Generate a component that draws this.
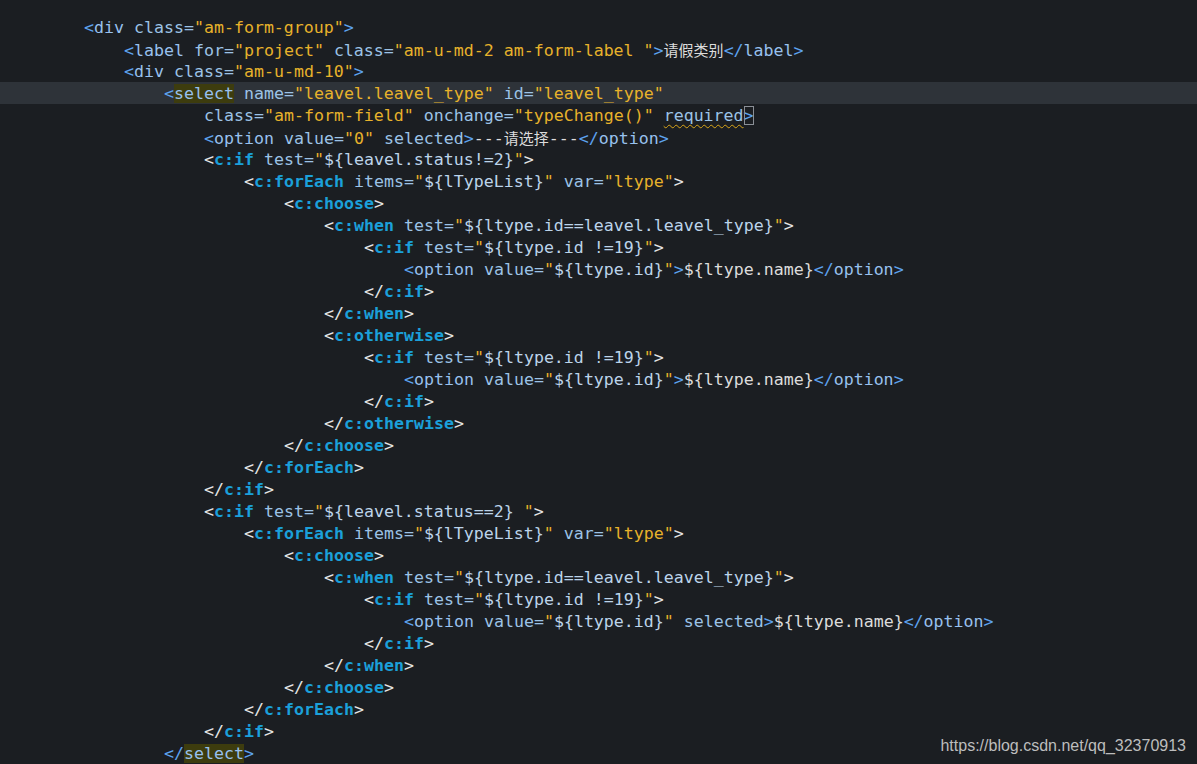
type Line = { lv: number; t: string; cont?: boolean; hl?: boolean }

const lines: Line[] = [
  { lv: 0, t: '<div class="am-form-group">' },
  { lv: 1, t: '<label for="project" class="am-u-md-2 am-form-label ">请假类别</label>' },
  { lv: 1, t: '<div class="am-u-md-10">' },
  { lv: 2, t: '<select name="leavel.leavel_type" id="leavel_type"', hl: true },
  { lv: 3, t: 'class="am-form-field" onchange="typeChange()" required>', cont: true },
  { lv: 3, t: '<option value="0" selected>---请选择---</option>' },
  { lv: 3, t: '<c:if test="${leavel.status!=2}">' },
  { lv: 4, t: '<c:forEach items="${lTypeList}" var="ltype">' },
  { lv: 5, t: '<c:choose>' },
  { lv: 6, t: '<c:when test="${ltype.id==leavel.leavel_type}">' },
  { lv: 7, t: '<c:if test="${ltype.id !=19}">' },
  { lv: 8, t: '<option value="${ltype.id}">${ltype.name}</option>' },
  { lv: 7, t: '</c:if>' },
  { lv: 6, t: '</c:when>' },
  { lv: 6, t: '<c:otherwise>' },
  { lv: 7, t: '<c:if test="${ltype.id !=19}">' },
  { lv: 8, t: '<option value="${ltype.id}">${ltype.name}</option>' },
  { lv: 7, t: '</c:if>' },
  { lv: 6, t: '</c:otherwise>' },
  { lv: 5, t: '</c:choose>' },
  { lv: 4, t: '</c:forEach>' },
  { lv: 3, t: '</c:if>' },
  { lv: 3, t: '<c:if test="${leavel.status==2} ">' },
  { lv: 4, t: '<c:forEach items="${lTypeList}" var="ltype">' },
  { lv: 5, t: '<c:choose>' },
  { lv: 6, t: '<c:when test="${ltype.id==leavel.leavel_type}">' },
  { lv: 7, t: '<c:if test="${ltype.id !=19}">' },
  { lv: 8, t: '<option value="${ltype.id}" selected>${ltype.name}</option>' },
  { lv: 7, t: '</c:if>' },
  { lv: 6, t: '</c:when>' },
  { lv: 5, t: '</c:choose>' },
  { lv: 4, t: '</c:forEach>' },
  { lv: 3, t: '</c:if>' },
  { lv: 2, t: '</select>' },
]

const BRACKET = "text-[#5ea3ef]"
const JBRACKET = "text-[#e6e6e6]"
const TAG = "text-[#98c1ee]"
const JTAG = "text-[#1ba0da] font-bold"
const ATTR = "text-[#9cc3e6]"
const STR = "text-[#e7b22b]"
const EXPR = "text-[#bcd4ea]"
const TEXT = "text-[#dcdcdc]"
const CJK = "text-[15px] [font-family:'Noto_Sans_CJK_SC',sans-serif]"

type Tok = { s: string; c: string }

function tokenize(line: string, cont: boolean): Tok[] {
  const out: Tok[] = []
  let i = 0
  let inTag = cont
  let jstl = false
  while (i < line.length) {
    const ch = line[i]
    if (ch === "<") {
      let br = "<"
      if (line[i + 1] === "/") br = "</"
      i += br.length
      let name = ""
      while (i < line.length && /[\w:]/.test(line[i])) name += line[i++]
      jstl = name.startsWith("c:")
      out.push({ s: br, c: jstl ? JBRACKET : BRACKET })
      out.push({ s: name, c: jstl ? JTAG : name === "select" ? TAG + " bg-[#3d3c0e]" : TAG })
      inTag = true
    } else if (inTag && ch === ">") {
      out.push({ s: ">", c: jstl ? JBRACKET : BRACKET })
      inTag = false
      i++
    } else if (inTag && ch === '"') {
      const end = line.indexOf('"', i + 1)
      const body = line.slice(i + 1, end)
      out.push({ s: '"', c: STR })
      out.push({ s: body, c: body.startsWith("$") ? EXPR : STR })
      out.push({ s: '"', c: STR })
      i = end + 1
    } else if (inTag && ch === "=") {
      out.push({ s: "=", c: ATTR })
      i++
    } else if (ch === " ") {
      out.push({ s: " ", c: "" })
      i++
    } else if (inTag) {
      let w = ""
      while (i < line.length && !/[ =>"<]/.test(line[i])) w += line[i++]
      out.push({ s: w, c: ATTR })
    } else {
      let w = ""
      while (i < line.length && line[i] !== "<") w += line[i++]
      out.push({ s: w, c: TEXT })
    }
  }
  return out
}

function renderText(tok: Tok, key: number) {
  const parts = tok.s.split(/([\u4e00-\u9fff]+)/)
  return (
    <span key={key} className={tok.c}>
      {parts.map((p, j) =>
        /[\u4e00-\u9fff]/.test(p) ? (
          <span key={j} className={CJK}>{p}</span>
        ) : (
          p
        )
      )}
    </span>
  )
}

const CodeLine = ({ line }: { line: Line }) => {
  const toks = tokenize(line.t, !!line.cont)
  return (
    <div className={`h-[22px] whitespace-pre pl-[84px] pt-[1px] leading-[21px] ${line.hl ? "bg-[#2e3339]" : ""}`}>
      <span style={{ paddingLeft: line.lv * 40 }} />
      {toks.map((tok, k) => {
        if (tok.s === "required")
          return (
            <span key={k} className="text-[#9cc3e6] underline decoration-wavy decoration-[#d9a619] decoration-1 underline-offset-[3px]">
              required
            </span>
          )
        if (line.cont && tok.s === ">")
          return (
            <span key={k} className={`${BRACKET} outline outline-1 outline-[#8a8f96] -outline-offset-1`}>
              &gt;
            </span>
          )
        return renderText(tok, k)
      })}
    </div>
  )
}

export default function App() {
  return (
    <div className="relative h-[764px] w-full overflow-hidden bg-[#1b1e22] pt-[16px] text-[16.6px] [font-family:'DejaVu_Sans_Mono',monospace]">
      {lines.map((l, i) => (
        <CodeLine key={i} line={l} />
      ))}
      <div className="absolute right-[11px] bottom-[7px] text-[16px] leading-[22px] text-[#bdbdbd] [font-family:'Liberation_Sans',Arial,sans-serif]">
        https://blog.csdn.net/qq_32370913
      </div>
    </div>
  )
}
